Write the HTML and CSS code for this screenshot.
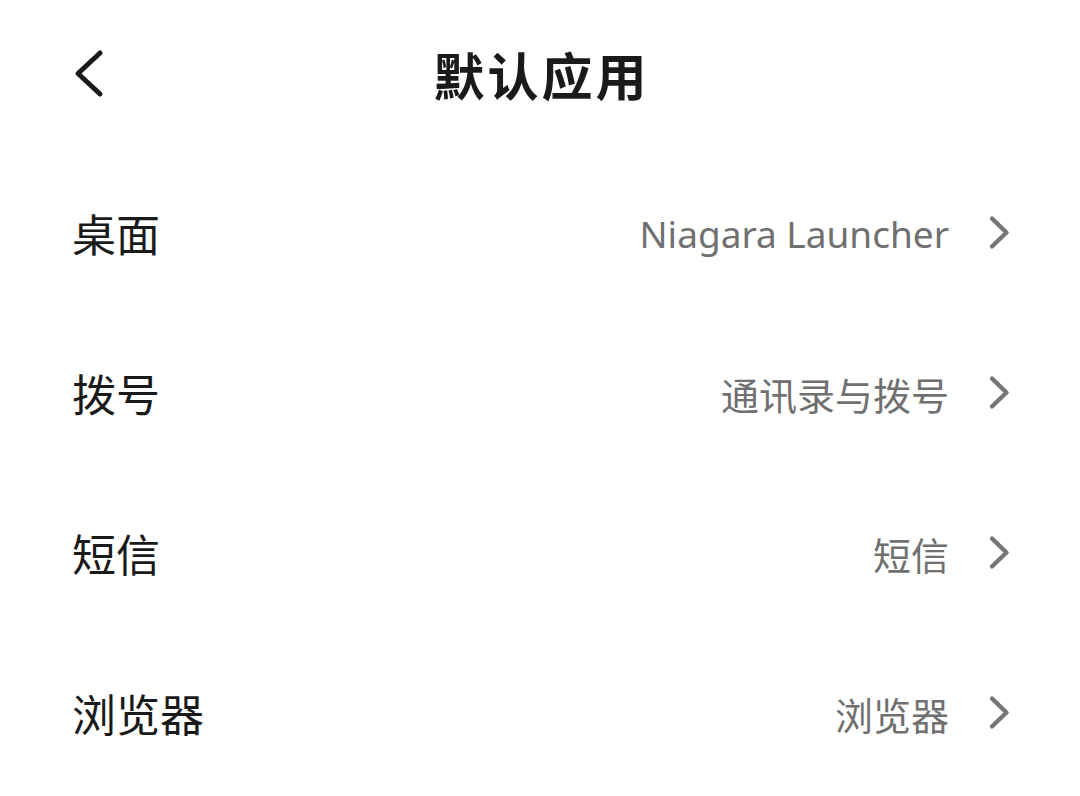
FILE: index.html
```html
<!DOCTYPE html>
<html lang="zh-CN">
<head>
<meta charset="utf-8">
<link rel="stylesheet" href="styles.css">
</head>
<body>
<div class="page">
  <header class="header">
    <svg class="back" width="32" height="50" viewBox="0 0 32 50"><path d="M28 4 L6 24.5 L28 45" fill="none" stroke="#1a1a1a" stroke-width="5" stroke-linecap="round" stroke-linejoin="round"/></svg>
    <h1 class="title">默认应用</h1>
  </header>
  <ul class="list">
    <li class="row"><span class="label">桌面</span><span class="value latin">Niagara Launcher</span><svg class="chev" width="22" height="36" viewBox="0 0 22 36"><path d="M4 3.5 L18.5 17.5 L4 31.5" fill="none" stroke="#757575" stroke-width="4.4" stroke-linecap="round" stroke-linejoin="round"/></svg></li>
    <li class="row"><span class="label">拨号</span><span class="value">通讯录与拨号</span><svg class="chev" width="22" height="36" viewBox="0 0 22 36"><path d="M4 3.5 L18.5 17.5 L4 31.5" fill="none" stroke="#757575" stroke-width="4.4" stroke-linecap="round" stroke-linejoin="round"/></svg></li>
    <li class="row"><span class="label">短信</span><span class="value">短信</span><svg class="chev" width="22" height="36" viewBox="0 0 22 36"><path d="M4 3.5 L18.5 17.5 L4 31.5" fill="none" stroke="#757575" stroke-width="4.4" stroke-linecap="round" stroke-linejoin="round"/></svg></li>
    <li class="row"><span class="label">浏览器</span><span class="value">浏览器</span><svg class="chev" width="22" height="36" viewBox="0 0 22 36"><path d="M4 3.5 L18.5 17.5 L4 31.5" fill="none" stroke="#757575" stroke-width="4.4" stroke-linecap="round" stroke-linejoin="round"/></svg></li>
  </ul>
</div>
</body>
</html>
```
FILE: styles.css
```css
html, body {
  margin: 0;
  padding: 0;
  background: #fff;
}
body {
  font-family: "Noto Sans CJK SC", "Noto Sans", sans-serif;
  width: 1080px;
  height: 796px;
  overflow: hidden;
}
.page {
  display: flex;
  flex-direction: column;
}
.header {
  position: relative;
  height: 153px;
  box-sizing: border-box;
  padding-bottom: 6px;
  display: flex;
  align-items: center;
  justify-content: center;
}
.back {
  position: absolute;
  left: 72px;
  top: 49px;
}
.title {
  margin: 0;
  font-size: 51px;
  font-weight: 700;
  color: #1a1a1a;
  letter-spacing: 3px;
  padding-left: 3px;
}
.list {
  list-style: none;
  margin: 0;
  padding: 0;
}
.row {
  height: 160px;
  display: flex;
  align-items: center;
  padding: 0 70px 0 72px;
}
.label {
  font-size: 44px;
  color: #1a1a1a;
  flex: 1;
}
.value {
  font-size: 38px;
  color: #707070;
}
.value.latin {
  font-family: "Noto Sans", sans-serif;
  font-size: 37px;
}
.chev {
  margin-left: 39px;
}
```
